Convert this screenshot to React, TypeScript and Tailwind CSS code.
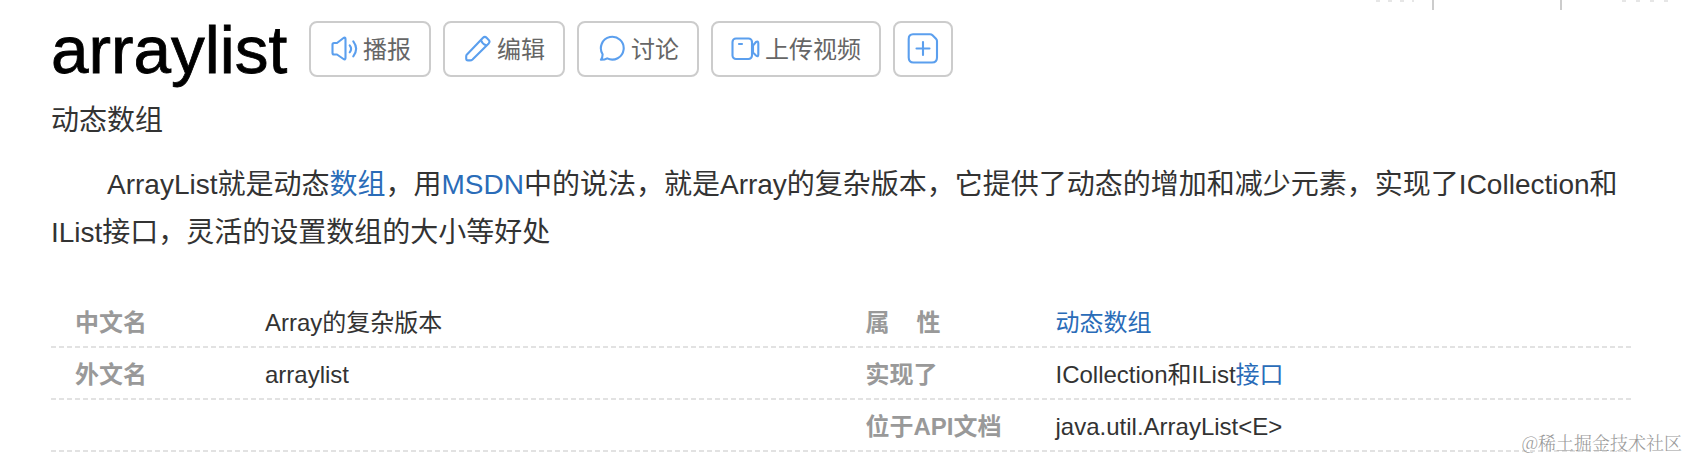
import { FC, ReactNode } from 'react';

interface ActionButtonProps {
  icon: ReactNode;
  label?: string;
  className: string;
}

const ActionButton: FC<ActionButtonProps> = ({ icon, label, className }) => {
  return (
    <button
      className={`flex h-14 items-center rounded-lg border-2 border-[#ccc] bg-white text-2xl text-[#666] ${className}`}
    >
      {icon}
      {label && <span className="pt-0.5 whitespace-nowrap">{label}</span>}
    </button>
  );
};

const iconProps = {
  fill: 'none',
  stroke: '#5b9fee',
  strokeWidth: 2.1,
  strokeLinecap: 'round',
  strokeLinejoin: 'round',
} as const;

const SpeakerIcon = () => (
  <svg width="28" height="28" viewBox="0 0 28 28" {...iconProps}>
    <path d="M1.500 9.500Q1.500 8 3 8H6L12.500 3Q14.500 2 14.500 4V23Q14.500 25 12.500 24L6 19.500H3Q1.500 19.500 1.500 18Z" />
    <path d="M18.700 10.300Q21.500 13.800 18.700 17.300" />
    <path d="M22.300 6.300Q28 13.800 22.300 21.300" />
  </svg>
);

const PencilIcon = () => (
  <svg width="28" height="28" viewBox="0 0 28 28" {...iconProps}>
    <path d="M1.500 20L18 2.800Q19.800 1 21.600 2.800L23.700 4.900Q25.300 6.600 23.700 8.400L7.500 24.500Q6.500 25.400 5 25.400H3Q1.200 25.400 1.200 23.500V21.500Q1.200 20.500 1.500 20Z" />
    <path d="M16 5.200Q17 8.500 21 10.300" />
  </svg>
);

const ChatIcon = () => (
  <svg width="28" height="28" viewBox="0 0 28 28" {...iconProps}>
    <path d="M3.600 19.200A11.400 11.400 0 1 1 8.200 23.400Q6 24.800 1.900 24.800Q3.700 22.500 3.600 19.200Z" />
  </svg>
);

const VideoIcon = () => (
  <svg width="29" height="28" viewBox="0 0 29 28" {...iconProps}>
    <rect x="1.500" y="3.500" width="19.500" height="20.500" rx="3.500" />
    <path d="M8 9H11" />
    <path d="M22 10.500L25 7Q27.300 5.500 27.300 8.500V19.500Q27.300 22.500 25 20.500L22 17.500Z" />
  </svg>
);

const PlusIcon = () => (
  <svg width="32" height="32" viewBox="0 0 32 32" {...iconProps}>
    <path d="M6 1.200H23Q24.500 1.200 25.500 2.200L29 5.700Q30 6.700 30 8V24.500Q30 29.500 25 29.500H6.500Q1.700 29.500 1.700 24.500V6Q1.700 1.200 6 1.200Z" />
    <path d="M9.500 15.500H22.500M16 9V22" />
  </svg>
);

const Link: FC<{ children: ReactNode }> = ({ children }) => (
  <a href="#" className="text-[#2a6cb8]">{children}</a>
);

interface InfoItem {
  name: ReactNode;
  value: ReactNode;
}

const leftItems: InfoItem[] = [
  { name: '中文名', value: 'Array的复杂版本' },
  { name: '外文名', value: 'arraylist' },
  { name: '', value: '' },
];

const rightItems: InfoItem[] = [
  {
    name: <span className="flex gap-[27px]"><span>属</span><span>性</span></span>,
    value: <Link>动态数组</Link>,
  },
  { name: '实现了', value: <>ICollection和IList<Link>接口</Link></> },
  { name: '位于API文档', value: 'java.util.ArrayList<E>' },
];

const InfoColumn: FC<{ items: InfoItem[] }> = ({ items }) => {
  return (
    <dl className="flex-1">
      {items.map((item, index) => (
        <div
          key={index}
          className="flex h-[52px] items-center bg-[repeating-linear-gradient(90deg,#e2e2e2_0_5px,transparent_5px_8px)] bg-[length:100%_2px] bg-bottom bg-no-repeat pt-0.5 pl-6 text-2xl"
        >
          <dt className="w-[190px] shrink-0 font-bold whitespace-nowrap text-[#999]">{item.name}</dt>
          <dd className="whitespace-nowrap text-[#333]">{item.value}</dd>
        </div>
      ))}
    </dl>
  );
};

export default function App() {
  return (
    <div className="relative h-[460px] w-[1688px] overflow-hidden bg-white pl-[51px] font-['Liberation_Sans','Noto_Sans_CJK_SC',sans-serif]">
      {/* lower edge of the toolbar above the entry */}
      <div className="absolute top-0 left-[1376px] flex h-[10px] items-start">
        <span className="mr-[18px] h-0.5 w-[38px] bg-[repeating-linear-gradient(90deg,#e6e6e6_0_4px,transparent_4px_12px)]" />
        <span className="mr-[126px] h-full w-0.5 bg-[#ccc]" />
        <span className="mr-[60px] h-full w-0.5 bg-[#ccc]" />
        <span className="h-0.5 w-[46px] bg-[repeating-linear-gradient(90deg,#e6e6e6_0_4px,transparent_4px_14px)]" />
      </div>

      <header className="flex h-[81px] pt-[21px]">
        <h1 className="w-[258px] text-[67.5px] leading-[57px] text-black [-webkit-text-stroke:0.8px_#000]">arraylist</h1>
        <div className="flex gap-3">
          <ActionButton className="w-[122px] gap-[4px] pl-5" icon={<SpeakerIcon />} label="播报" />
          <ActionButton className="w-[122px] gap-[4px] pl-5" icon={<PencilIcon />} label="编辑" />
          <ActionButton className="w-[122px] gap-[4px] pl-5" icon={<ChatIcon />} label="讨论" />
          <ActionButton className="w-[170px] gap-[5px] pl-[18px]" icon={<VideoIcon />} label="上传视频" />
          <ActionButton className="w-[60px] justify-center" icon={<PlusIcon />} />
        </div>
      </header>

      <h2 className="mt-5 text-[28px] leading-10 text-[#333]">动态数组</h2>

      <p className="mt-5 w-[1580px] indent-14 text-[28px] leading-[48px] text-[#333]">
        ArrayList就是动态<Link>数组</Link>，用<Link>MSDN</Link>中的说法，就是Array的复杂版本，它提供了动态的增加和减少元素，实现了ICollection和IList接口，灵活的设置数组的大小等好处
      </p>

      <section className="mt-[39px] flex w-[1581px]">
        <InfoColumn items={leftItems} />
        <InfoColumn items={rightItems} />
      </section>

      <div className="absolute right-[6px] bottom-[4px] font-['Noto_Serif_CJK_SC','Noto_Sans_CJK_SC',serif] text-lg font-light text-[#999]">
        @稀土掘金技术社区
      </div>
    </div>
  );
}
